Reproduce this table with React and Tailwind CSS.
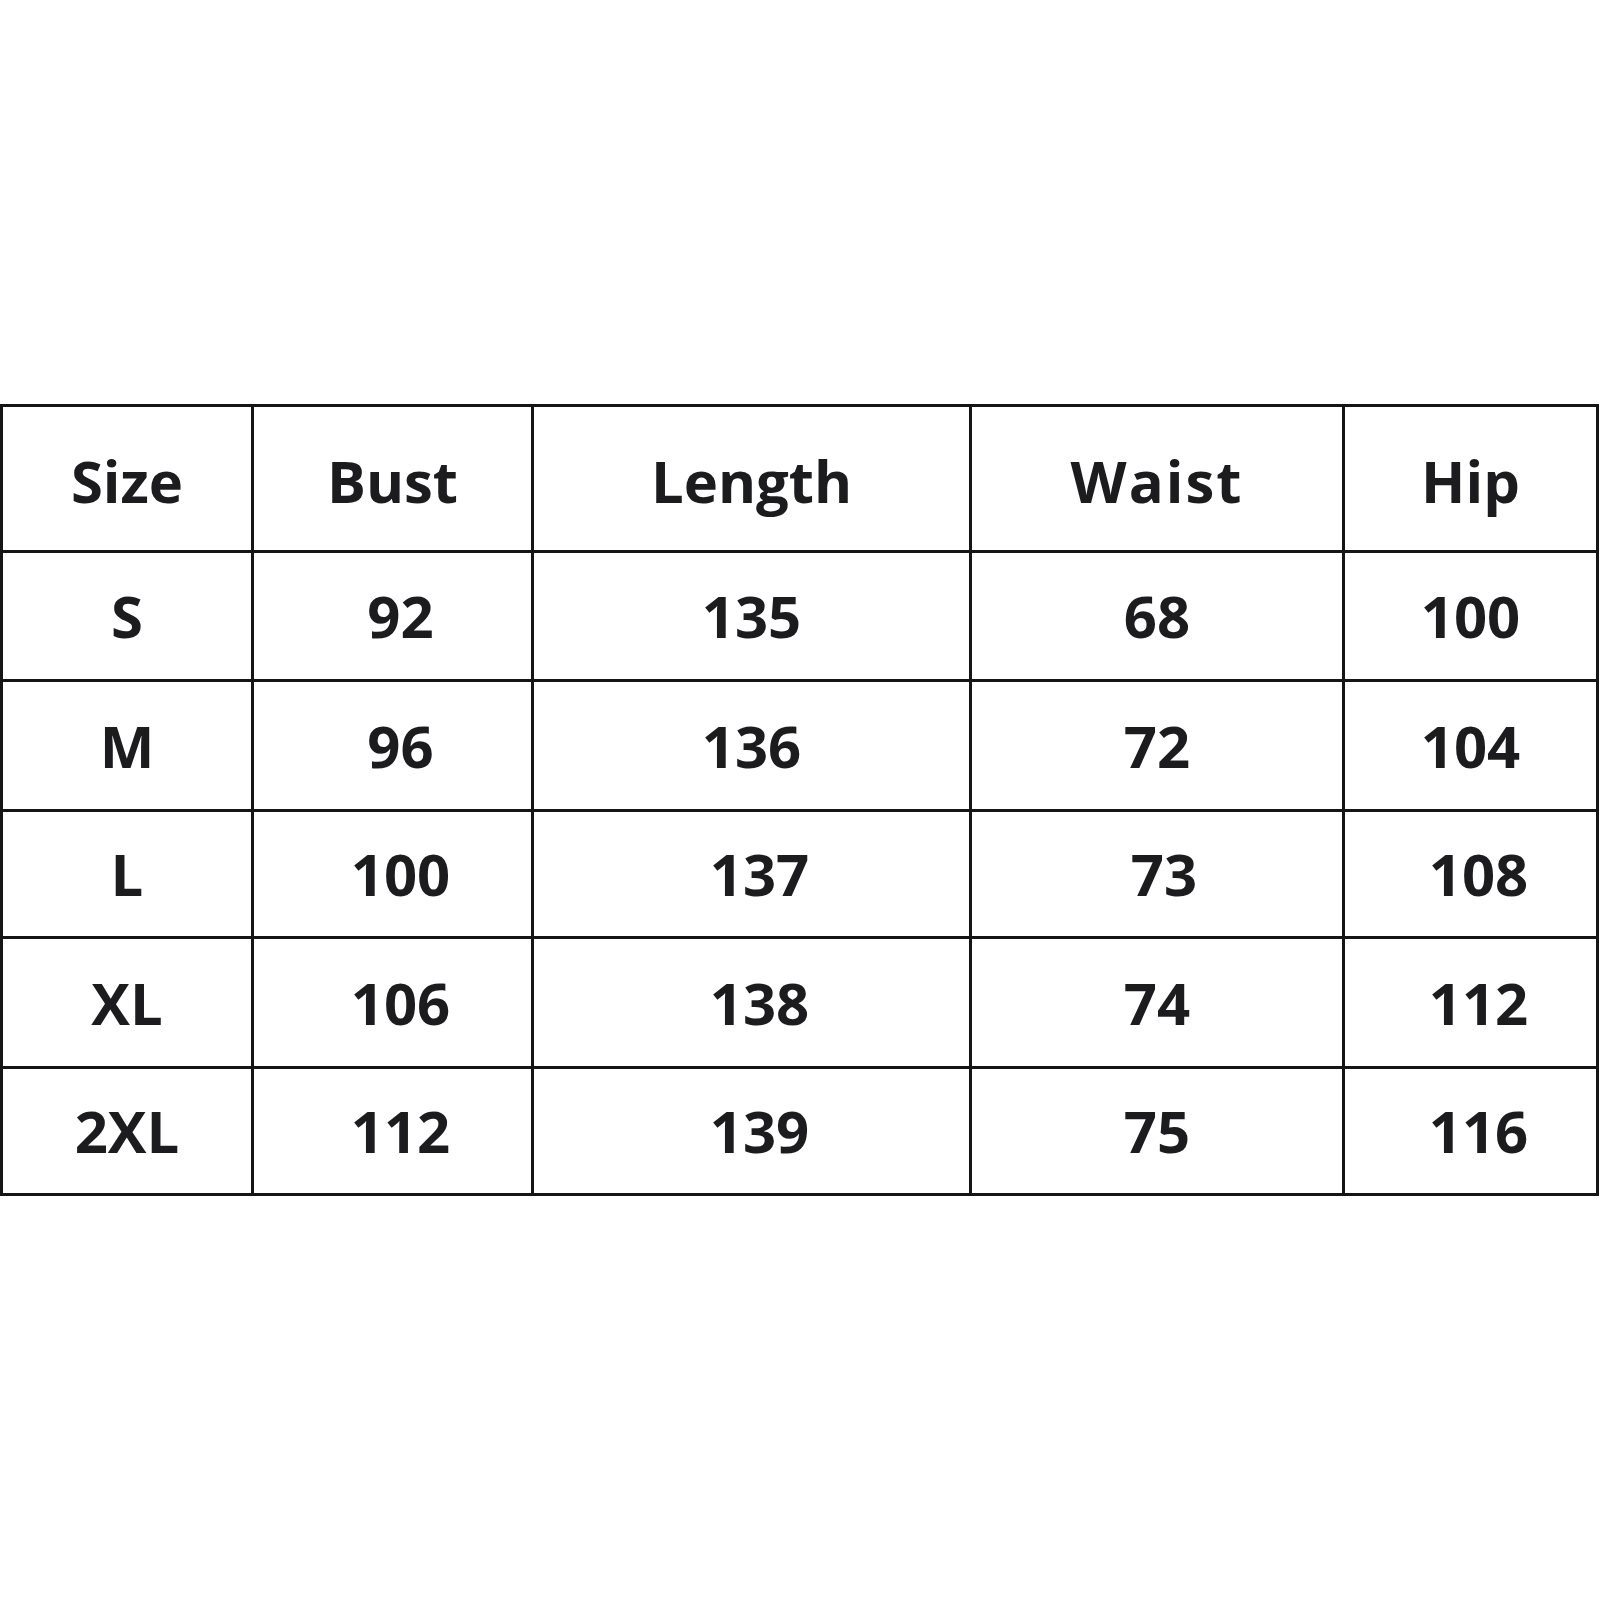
import React from "react";

const header = ["Size", "Bust", "Length", "Waist", "Hip"];
const rows = [
  ["S", "92", "135", "68", "100"],
  ["M", "96", "136", "72", "104"],
  ["L", "100", "137", "73", "108"],
  ["XL", "106", "138", "74", "112"],
  ["2XL", "112", "139", "75", "116"],
];

// offsets (px shift to the right) per data cell
const shiftClass = (r, c) => {
  if (c === 1) return "pl-[16px]";
  if (r >= 2 && c === 2) return "pl-[16px]";
  if (r === 2 && c === 3) return "pl-[14px]";
  if (r >= 2 && c === 4) return "pl-[16px]";
  return "";
};

const headerClass = (h) => (h === "Waist" ? "tracking-[2px]" : "");

export default function App() {
  return (
    <div className="w-[1600px] h-[1600px] bg-white pt-[404px]" style={{ fontFamily: '"Open Sans", "Noto Sans", sans-serif' }}>
      <div className="grid w-fit grid-cols-[251px_280px_438px_373px_254px] grid-rows-[146px_129px_130px_127px_130px_127px] border-l-[3px] border-t-[3px] border-[#151515] text-[#1c1c1e]">
        {header.map((h) => (
          <div key={h} className={"flex items-center justify-center border-r-[3px] border-b-[3px] border-[#151515] text-[58px] font-bold leading-none pt-[4px] " + headerClass(h)}>
            {h}
          </div>
        ))}
        {rows.map((row, r) =>
          row.map((v, c) => (
            <div key={r + "-" + c} className={"flex items-center justify-center border-r-[3px] border-b-[3px] border-[#151515] text-[58px] font-bold leading-none " + shiftClass(r, c)}>
              {v}
            </div>
          ))
        )}
      </div>
    </div>
  );
}
